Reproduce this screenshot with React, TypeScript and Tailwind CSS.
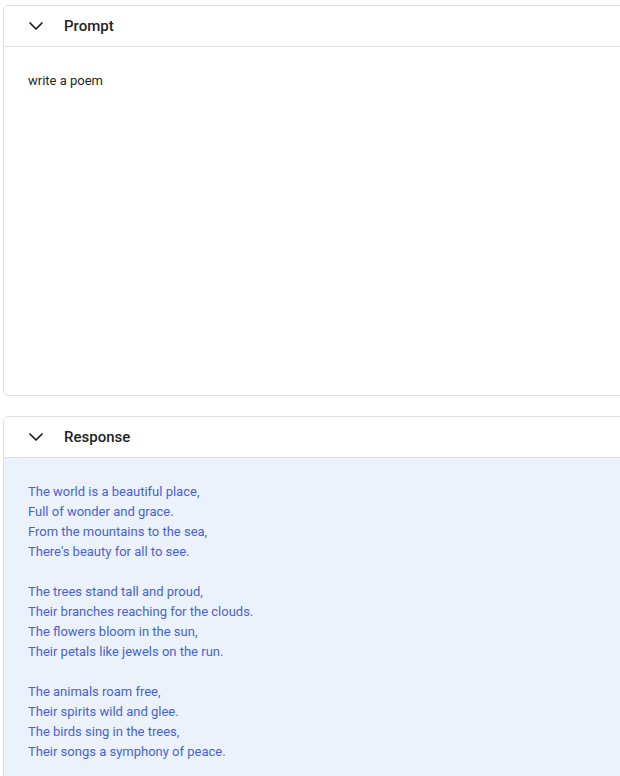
import { ChevronDown } from "lucide-react";

const poem = [
  ["The world is a beautiful place,", "Full of wonder and grace.", "From the mountains to the sea,", "There's beauty for all to see."],
  ["The trees stand tall and proud,", "Their branches reaching for the clouds.", "The flowers bloom in the sun,", "Their petals like jewels on the run."],
  ["The animals roam free,", "Their spirits wild and glee.", "The birds sing in the trees,", "Their songs a symphony of peace."],
];

function Header({ title }: { title: string }) {
  return (
    <div className="flex items-center h-[41px] border-b border-[#dfdfdf] bg-white">
      <ChevronDown className="ml-[20px] w-[24px] h-[24px] text-[#1f1f1f]" strokeWidth={1.75} />
      <span className="ml-[16px] text-[15px] font-medium text-[#1f1f1f]">{title}</span>
    </div>
  );
}

export default function App() {
  return (
    <div className="h-screen overflow-hidden bg-white pl-[3px] pt-[5px] font-['Roboto',sans-serif]">
      <div className="w-[660px] h-[391px] rounded-[5px] border border-[#dfdfdf] overflow-hidden">
        <Header title="Prompt" />
        <div className="pl-[24px] pt-[24px] text-[13px] leading-[20px] text-[#1f1f1f]">write a poem</div>
      </div>

      <div className="mt-[20px] w-[660px] h-[420px] rounded-[5px] border border-[#dfdfdf] overflow-hidden">
        <Header title="Response" />
        <div className="h-full bg-[#ecf2fc] pl-[24px] pt-[24px] text-[13px] leading-[20px] text-[#4563d3]">
          {poem.map((stanza, i) => (
            <div key={i} className={i > 0 ? "mt-[20px]" : ""}>
              {stanza.map((line) => (
                <div key={line}>{line}</div>
              ))}
            </div>
          ))}
        </div>
      </div>
    </div>
  );
}
